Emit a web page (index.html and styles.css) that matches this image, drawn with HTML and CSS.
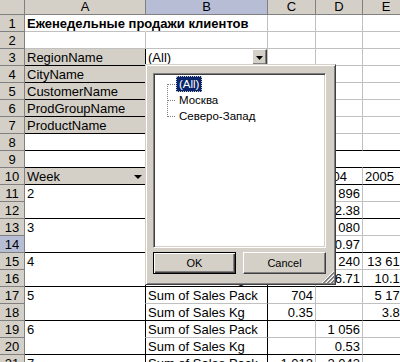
FILE: index.html
```html
<!DOCTYPE html>
<html>
<head>
<meta charset="utf-8">
<link rel="stylesheet" href="styles.css">
</head>
<body>
<div class="sheet">
  <div class="h"></div><div class="h">A</div><div class="h sel">B</div><div class="h">C</div><div class="h">D</div><div class="h">E</div><div class="h">F</div>

  <div class="rh">1</div><div class="c t">Еженедельные продажи клиентов</div><div class="c"></div><div class="c"></div><div class="c"></div><div class="c"></div><div class="c"></div>
  <div class="rh">2</div><div class="c"></div><div class="c"></div><div class="c"></div><div class="c"></div><div class="c"></div><div class="c"></div>
  <div class="rh">3</div><div class="c g k r">RegionName</div><div class="c fld">(All)<span class="dd"><svg width="7" height="4" viewBox="0 0 7 4"><polygon points="0,0 7,0 3.5,4" fill="#000"/></svg></span></div><div class="c"></div><div class="c"></div><div class="c"></div><div class="c"></div>
  <div class="rh">4</div><div class="c g k r">CityName</div><div class="c fld">(All)<span class="dd"><svg width="7" height="4" viewBox="0 0 7 4"><polygon points="0,0 7,0 3.5,4" fill="#000"/></svg></span></div><div class="c"></div><div class="c"></div><div class="c"></div><div class="c"></div>
  <div class="rh">5</div><div class="c g k r">CustomerName</div><div class="c fld">(All)<span class="dd"><svg width="7" height="4" viewBox="0 0 7 4"><polygon points="0,0 7,0 3.5,4" fill="#000"/></svg></span></div><div class="c"></div><div class="c"></div><div class="c"></div><div class="c"></div>
  <div class="rh">6</div><div class="c g k r">ProdGroupName</div><div class="c fld">(All)<span class="dd"><svg width="7" height="4" viewBox="0 0 7 4"><polygon points="0,0 7,0 3.5,4" fill="#000"/></svg></span></div><div class="c"></div><div class="c"></div><div class="c"></div><div class="c"></div>
  <div class="rh">7</div><div class="c g k r">ProductName</div><div class="c fld">(All)<span class="dd"><svg width="7" height="4" viewBox="0 0 7 4"><polygon points="0,0 7,0 3.5,4" fill="#000"/></svg></span></div><div class="c"></div><div class="c"></div><div class="c"></div><div class="c"></div>
  <div class="rh">8</div><div class="c k r"></div><div class="c k"></div><div class="c k"></div><div class="c k"></div><div class="c k"></div><div class="c"></div>
  <div class="rh">9</div><div class="c k r"></div><div class="c k r"></div><div class="c k nr">Year</div><div class="c k nr"></div><div class="c k r"></div><div class="c"></div>
  <div class="rh">10</div><div class="c g k r fld">Week<svg class="arr" width="8" height="4" viewBox="0 0 8 4"><polygon points="0,0 8,0 4,4" fill="#000"/></svg></div><div class="c g k r fld">Data<svg class="arr" width="8" height="4" viewBox="0 0 8 4"><polygon points="0,0 8,0 4,4" fill="#000"/></svg></div><div class="c k">2003</div><div class="c k">2004</div><div class="c k r">2005</div><div class="c"></div>

  <div class="rh">11</div><div class="c w r">2</div><div class="c r">Sum of Sales Pack</div><div class="c n"></div><div class="c n">1 896</div><div class="c n r"></div><div class="c"></div>
  <div class="rh">12</div><div class="c k r"></div><div class="c k r">Sum of Sales Kg</div><div class="c k n"></div><div class="c k n">2.38</div><div class="c k n r"></div><div class="c"></div>
  <div class="rh">13</div><div class="c w r">3</div><div class="c r">Sum of Sales Pack</div><div class="c n"></div><div class="c n">1 080</div><div class="c n r"></div><div class="c"></div>
  <div class="rh sel">14</div><div class="c k r"></div><div class="c k r">Sum of Sales Kg</div><div class="c k n"></div><div class="c k n">0.97</div><div class="c k n r"></div><div class="c"></div>
  <div class="rh">15</div><div class="c w r">4</div><div class="c r">Sum of Sales Pack</div><div class="c n"></div><div class="c n">3 240</div><div class="c n r">13 618</div><div class="c"></div>
  <div class="rh">16</div><div class="c k r"></div><div class="c k r">Sum of Sales Kg</div><div class="c k n"></div><div class="c k n">6.71</div><div class="c k n r">10.19</div><div class="c"></div>
  <div class="rh">17</div><div class="c w r">5</div><div class="c r">Sum of Sales Pack</div><div class="c n">704</div><div class="c n"></div><div class="c n r">5 178</div><div class="c"></div>
  <div class="rh">18</div><div class="c k r"></div><div class="c k r">Sum of Sales Kg</div><div class="c k n">0.35</div><div class="c k n"></div><div class="c k n r">3.85</div><div class="c"></div>
  <div class="rh">19</div><div class="c w r">6</div><div class="c r">Sum of Sales Pack</div><div class="c n"></div><div class="c n">1 056</div><div class="c n r"></div><div class="c"></div>
  <div class="rh">20</div><div class="c k r"></div><div class="c k r">Sum of Sales Kg</div><div class="c k n"></div><div class="c k n">0.53</div><div class="c k n r"></div><div class="c"></div>
  <div class="rh">21</div><div class="c w r">7</div><div class="c r">Sum of Sales Pack</div><div class="c n">1 012</div><div class="c n">2 043</div><div class="c n r"></div><div class="c"></div>
</div>

<div class="dlg">
  <div class="list">
    <svg class="tree" width="24" height="48" viewBox="0 0 24 48">
      <line x1="13.5" y1="10" x2="13.5" y2="43" stroke="#808080" stroke-dasharray="1 1"/>
      <line x1="14" y1="10.5" x2="21" y2="10.5" stroke="#808080" stroke-dasharray="1 1"/>
      <line x1="14" y1="26.5" x2="21" y2="26.5" stroke="#808080" stroke-dasharray="1 1"/>
      <line x1="14" y1="42.5" x2="21" y2="42.5" stroke="#808080" stroke-dasharray="1 1"/>
    </svg>
    <div class="item"><span class="lbl on">(All)</span></div>
    <div class="item"><span class="lbl">Москва</span></div>
    <div class="item"><span class="lbl">Северо-Запад</span></div>
  </div>
  <div class="btns">
    <button class="btn def">OK</button>
    <button class="btn">Cancel</button>
  </div>
  <svg class="grip" width="12" height="12" viewBox="0 0 12 12" shape-rendering="crispEdges">
    <line x1="12" y1="0" x2="0" y2="12" stroke="#fff"/>
    <line x1="12" y1="1" x2="1" y2="12" stroke="#808080"/>
    <line x1="12" y1="2" x2="2" y2="12" stroke="#808080"/>
    <line x1="12" y1="4" x2="4" y2="12" stroke="#fff"/>
    <line x1="12" y1="5" x2="5" y2="12" stroke="#808080"/>
    <line x1="12" y1="6" x2="6" y2="12" stroke="#808080"/>
    <line x1="12" y1="8" x2="8" y2="12" stroke="#fff"/>
    <line x1="12" y1="9" x2="9" y2="12" stroke="#808080"/>
    <line x1="12" y1="10" x2="10" y2="12" stroke="#808080"/>
  </svg>
</div>
</body>
</html>
```

FILE: styles.css
```css
* { box-sizing: border-box; }
html, body { margin: 0; padding: 0; }
body {
  width: 400px;
  height: 362px;
  overflow: hidden;
  position: relative;
  background: #fff;
  color: #000;
  font-family: "Liberation Sans", Arial, sans-serif;
  font-size: 13px;
}

.sheet {
  display: grid;
  grid-template-columns: 25px 121px 122px 48px 47px 47px 40px;
  grid-template-rows: 15px repeat(21, 17px);
}

.h {
  background: #d4d0c8;
  border-right: 1px solid #808080;
  border-bottom: 1px solid #808080;
  text-align: center;
  line-height: 14px;
}
.rh {
  background: #d4d0c8;
  border-right: 1px solid #808080;
  border-bottom: 1px solid #808080;
  text-align: center;
  padding-top: 1px;
  line-height: 15px;
}
.h.sel, .rh.sel { background: #b6bdd4; }

.c {
  border-right: 1px solid #c0c0c0;
  border-bottom: 1px solid #c0c0c0;
  padding: 1px 2px 0;
  line-height: 15px;
  white-space: nowrap;
  overflow: hidden;
}
.k { border-bottom-color: #000; }
.r { border-right-color: #000; }
.w { border-bottom-color: transparent; }
.nr { border-right-color: transparent; }
.g { background: #d4d0c8; }
.n { text-align: right; }
.t {
  font-weight: bold;
  overflow: visible;
  border-right-color: transparent;
}

.fld {
  display: flex;
  align-items: center;
  justify-content: space-between;
  padding-right: 0;
}
.dd {
  flex: none;
  align-self: flex-start;
  margin-top: -1px;
  width: 15px;
  height: 16px;
  background: #d4d0c8;
  border: 1px solid;
  border-color: #fff #404040 #404040 #fff;
  box-shadow: inset -1px -1px #808080;
  display: flex;
  align-items: center;
  justify-content: center;
}
.dd svg { display: block; margin-top: 1px; }
.arr { display: block; flex: none; margin-right: 3px; margin-top: 1px; }

.dlg {
  position: absolute;
  left: 145px;
  top: 64px;
  width: 191px;
  height: 221px;
  background: #d4d0c8;
  border: 1px solid;
  border-color: #d4d0c8 #404040 #404040 #d4d0c8;
  box-shadow: inset 1px 1px #fff, inset -1px -1px #808080;
  padding: 8px 9px 0 7px;
  display: flex;
  flex-direction: column;
  gap: 4px;
  font-size: 11px;
}
.list {
  position: relative;
  flex: none;
  height: 175px;
  background: #fff;
  border: 1px solid;
  border-color: #808080 #fff #fff #808080;
  box-shadow: inset 1px 1px #404040, inset -1px -1px #d4d0c8;
  padding: 2px 1px 0;
  font-size: 11.5px;
}
.tree { position: absolute; left: 0; top: 0; }
.item {
  height: 16px;
  padding-left: 21px;
  white-space: nowrap;
}
.lbl {
  display: inline-block;
  vertical-align: top;
  height: 16px;
  line-height: 14px;
  padding: 0 2px;
  border: 1px dotted transparent;
}
.lbl.on {
  background: #0a246a;
  color: #fff;
  border-color: #c8c8c8;
}

.btns {
  display: flex;
  justify-content: space-between;
  height: 22px;
  flex: none;
}
.btn {
  width: 83px;
  height: 22px;
  margin: 0;
  padding: 0;
  background: #d4d0c8;
  color: #000;
  font: 11px "Liberation Sans", Arial, sans-serif;
  border: 1px solid;
  border-color: #fff #404040 #404040 #fff;
  box-shadow: inset -1px -1px #808080;
}
.btn.def {
  border-color: #000;
  box-shadow: inset 1px 1px #fff, inset -1px -1px #404040, inset -2px -2px #808080;
}
.grip { position: absolute; right: 1px; bottom: 1px; }
```
